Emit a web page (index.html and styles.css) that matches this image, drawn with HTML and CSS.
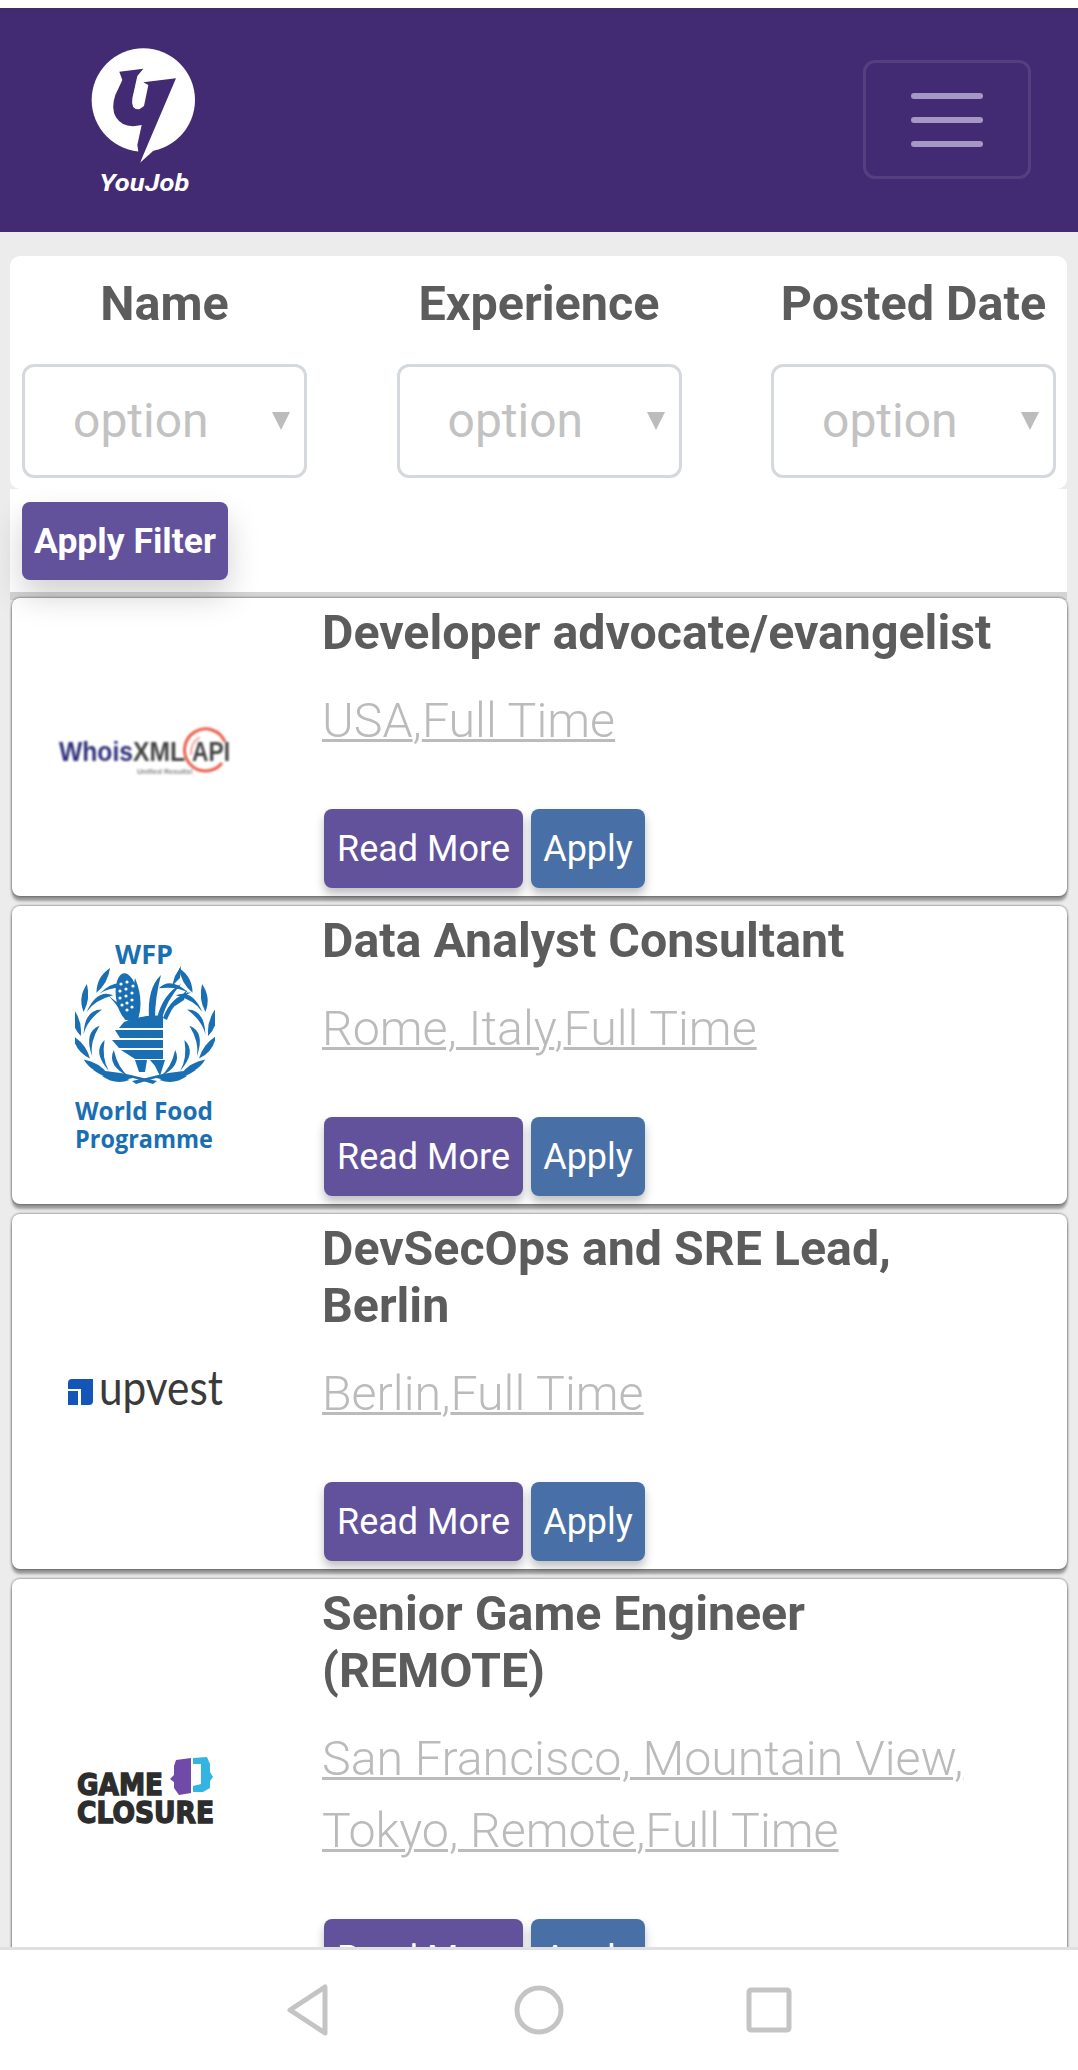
FILE: index.html
```html
<!DOCTYPE html>
<html>
<head>
    <title>YouJob</title>
    <link rel="stylesheet" href="styles.css">
</head>
<body>
    <header class="topbar">
        <svg class="brand" viewBox="0 0 390 540">
            <circle cx="190" cy="210" r="155" fill="#fff"/>
            <path d="M180 398L200 340L262 330Q250 350 225 358Z" fill="#fff"/>
            <path d="M118 125L190 116L172 138L157 205Q152 240 178 238L192 228L205 165L190 157L288 145L180 398L172 345L185 285Q130 298 108 262Q92 235 106 195L127 150Z" fill="#432b73"/>
            <text class="brand_name" x="58" y="483" textLength="270" lengthAdjust="spacingAndGlyphs">YouJob</text>
        </svg>
        <button class="toggler"><span></span><span></span><span></span></button>
    </header>

    <main class="content">
        <section class="filters">
            <div class="filter">
                <label>Name</label>
                <div class="select_wrap"><select><option>option</option></select></div>
            </div>
            <div class="filter">
                <label>Experience</label>
                <div class="select_wrap"><select><option>option</option></select></div>
            </div>
            <div class="filter">
                <label>Posted Date</label>
                <div class="select_wrap"><select><option>option</option></select></div>
            </div>
        </section>
        <div class="filter_action">
            <button class="btn btn_filter">Apply Filter</button>
        </div>

        <div class="jobs">
            <article class="job">
                <div class="job_logo">
                    <svg class="logo_whois" width="176" height="60" viewBox="0 0 176 60">
                        <text x="2" y="38" class="whois_a" textLength="74" lengthAdjust="spacingAndGlyphs">Whois</text>
                        <text x="76" y="38" class="whois_b" textLength="52" lengthAdjust="spacingAndGlyphs">XML</text>
                        <text x="135" y="38" class="whois_b" textLength="38" lengthAdjust="spacingAndGlyphs">API</text>
                        <path d="M165 40A21 21 0 1 1 168 19" fill="none" stroke="#e8604c" stroke-width="3"/>
                        <path d="M134 32Q133 20 143 14" fill="none" stroke="#e8a498" stroke-width="2"/>
                        <text x="80" y="51" class="whois_c" textLength="56" lengthAdjust="spacingAndGlyphs">Unified Results!</text>
                    </svg>
                </div>
                <div class="job_body">
                    <h2 class="job_title">Developer advocate/evangelist</h2>
                    <p class="job_meta"><a href="#">USA</a>,<a href="#">Full Time</a></p>
                    <div class="job_actions">
                        <button class="btn btn_read">Read More</button>
                        <button class="btn btn_apply">Apply</button>
                    </div>
                </div>
            </article>

            <article class="job">
                <div class="job_logo">
                    <svg class="logo_wfp" width="140" height="212" viewBox="0 0 140 212">
                        <defs>
                            <g id="sprig">
                                <path d="M0 0Q-13 9 -28 3Q-14 -4 0 0Z"/>
                                <path d="M-1 -3Q-14 -8 -23 -25Q-26 -8 -1 -3Z"/>
                            </g>
                            <g id="wreath">
                                <use href="#sprig" transform="rotate(15 69 84) translate(69 140)"/>
                                <use href="#sprig" transform="rotate(37 69 84) translate(69 144)"/>
                                <use href="#sprig" transform="rotate(59 69 84) translate(69 147)"/>
                                <use href="#sprig" transform="rotate(81 69 84) translate(69 148)"/>
                                <use href="#sprig" transform="rotate(103 69 84) translate(69 146)"/>
                                <use href="#sprig" transform="rotate(125 69 84) translate(69 142)"/>
                                <path d="M68 136Q48 130 18 128Q38 142 58 136L78 142L82 139Z"/>
                            </g>
                        </defs>
                        <text x="69" y="22" text-anchor="middle" class="wfp_top">WFP</text>
                        <g fill="#1a6fb3">
                            <use href="#wreath"/>
                            <use href="#wreath" transform="translate(139 0) scale(-1 1)"/>
                            <path d="M29 50Q42 60 50 78L58 76L44 62Z"/>
                            <ellipse cx="52" cy="55" rx="11" ry="24" transform="rotate(-8 52 55)"/>
                            <path d="M60 36Q70 60 62 80L53 78Z"/>
                            <path d="M74 76Q72 46 86 33Q80 56 80 76Z"/>
                            <path d="M82 76Q88 52 106 42Q92 58 87 76Z"/>
                            <path d="M88 76Q96 54 116 50Q98 60 92 78Z"/>
                            <path d="M100 34L106 24L105 36L97 44Z"/>
                            <path d="M100 60L112 48L109 58L100 64Z"/>
                            <path d="M49 80Q70 72 88 74V86H44Z"/>
                            <path d="M40 88H88V96H45Z"/>
                            <path d="M37 98H88V106H44Z"/>
                            <path d="M46 108H88V117H60Z"/>
                            <path d="M60 118L72 118L70 130L64 130Z"/>
                            <path d="M75 118H90L85 134L80 124Z"/>
                        </g>
                        <g fill="#fff">
                            <circle cx="46" cy="42" r="1.6"/><circle cx="52" cy="40" r="1.6"/><circle cx="58" cy="44" r="1.6"/>
                            <circle cx="45" cy="49" r="1.6"/><circle cx="51" cy="47" r="1.6"/><circle cx="57" cy="51" r="1.6"/>
                            <circle cx="45" cy="56" r="1.6"/><circle cx="51" cy="54" r="1.6"/><circle cx="57" cy="58" r="1.6"/>
                            <circle cx="47" cy="63" r="1.6"/><circle cx="52" cy="61" r="1.6"/><circle cx="57" cy="65" r="1.6"/>
                            <circle cx="52" cy="68" r="1.6"/>
                        </g>
                        <text x="69" y="178" text-anchor="middle" class="wfp_name" textLength="138" lengthAdjust="spacingAndGlyphs">World Food</text>
                        <text x="69" y="206" text-anchor="middle" class="wfp_name" textLength="138" lengthAdjust="spacingAndGlyphs">Programme</text>
                    </svg>
                </div>
                <div class="job_body">
                    <h2 class="job_title">Data Analyst Consultant</h2>
                    <p class="job_meta"><a href="#">Rome, Italy</a>,<a href="#">Full Time</a></p>
                    <div class="job_actions">
                        <button class="btn btn_read">Read More</button>
                        <button class="btn btn_apply">Apply</button>
                    </div>
                </div>
            </article>

            <article class="job">
                <div class="job_logo">
                    <svg class="logo_upvest" width="158" height="54" viewBox="0 0 158 54">
                        <path d="M2 20Q2 16 6 16H27V38Q27 42 23 42H15V26H2Z" fill="#1456b8"/>
                        <path d="M2 28H12V42H2Z" fill="#1456b8"/>
                        <text x="33" y="42" class="upvest_name" textLength="124" lengthAdjust="spacingAndGlyphs">upvest</text>
                    </svg>
                </div>
                <div class="job_body">
                    <h2 class="job_title">DevSecOps and SRE Lead, Berlin</h2>
                    <p class="job_meta"><a href="#">Berlin</a>,<a href="#">Full Time</a></p>
                    <div class="job_actions">
                        <button class="btn btn_read">Read More</button>
                        <button class="btn btn_apply">Apply</button>
                    </div>
                </div>
            </article>

            <article class="job">
                <div class="job_logo">
                    <svg class="logo_game" width="140" height="70" viewBox="0 0 140 70">
                        <text x="2" y="39" class="game_name" textLength="86" lengthAdjust="spacingAndGlyphs">GAME</text>
                        <text x="2" y="67" class="game_name" textLength="137" lengthAdjust="spacingAndGlyphs">CLOSURE</text>
                        <path d="M101 4L116 2V37L104 39L99 32V26L95 23L99 19V10Z" fill="#6f4aa8"/>
                        <path d="M118 2L132 1L135 8V16L138 21L135 25V32L128 36H118V30L126 28V8L118 8Z" fill="#34b4e0"/>
                    </svg>
                </div>
                <div class="job_body">
                    <h2 class="job_title">Senior Game Engineer (REMOTE)</h2>
                    <p class="job_meta"><a href="#">San Francisco, Mountain View, Tokyo, Remote</a>,<a href="#">Full Time</a></p>
                    <div class="job_actions">
                        <button class="btn btn_read">Read More</button>
                        <button class="btn btn_apply">Apply</button>
                    </div>
                </div>
            </article>
        </div>
    </main>

    <nav class="softkeys">
        <svg width="50" height="54" viewBox="0 0 50 54"><path d="M41 4V50L6 27Z" fill="none" stroke="#c4c4c4" stroke-width="5" stroke-linejoin="round"/></svg>
        <svg width="50" height="54" viewBox="0 0 50 54"><ellipse cx="25" cy="27" rx="22" ry="22" fill="none" stroke="#c4c4c4" stroke-width="5"/></svg>
        <svg width="50" height="54" viewBox="0 0 50 54"><rect x="5" y="7" width="40" height="40" rx="2" fill="none" stroke="#c4c4c4" stroke-width="5"/></svg>
    </nav>
</body>
</html>
```

FILE: styles.css
```css
* {
    box-sizing: border-box;
    font-family: Roboto, "Liberation Sans", sans-serif;
}
html, body {
    margin: 0;
    height: 2070px;
    overflow: hidden;
    background: #fff;
}
body {
    padding-top: 8px;
}
.topbar {
    display: flex;
    justify-content: space-between;
    align-items: flex-start;
    height: 224px;
    padding: 14px 47px 0 80px;
    background: #432b73;
    border-top: 3px solid #3f2d68;
}
.brand {
    width: 130px;
    height: 180px;
    margin-top: 5px;
}
.brand_name {
    font-size: 72px;
    font-weight: 700;
    font-style: italic;
    fill: #fff;
}
.toggler {
    display: flex;
    flex-direction: column;
    align-items: center;
    gap: 18px;
    width: 168px;
    height: 119px;
    margin-top: 35px;
    padding: 30px 0 0;
    background: none;
    border: 3px solid #54407f;
    border-radius: 12px;
}
.toggler span {
    width: 72px;
    height: 6px;
    background: #a698c4;
    border-radius: 3px;
}
.content {
    padding: 24px 11px 0 10px;
    background: #ececec;
    height: 1838px;
}
.filters {
    display: flex;
    justify-content: space-between;
    height: 233px;
    padding: 19px 11px 0 12px;
    background: #fff;
    border-radius: 10px;
}
.filter {
    width: 285px;
    text-align: center;
}
.filter label {
    display: block;
    height: 57px;
    margin-bottom: 32px;
    font-size: 48.5px;
    line-height: 57px;
    font-weight: 700;
    color: #5c5c5c;
    white-space: nowrap;
}
.select_wrap {
    position: relative;
}
.select_wrap::after {
    content: "";
    position: absolute;
    right: 17px;
    top: 48px;
    border-left: 9px solid transparent;
    border-right: 9px solid transparent;
    border-top: 18px solid #bcbcbc;
}
.select_wrap select {
    display: block;
    width: 100%;
    height: 114px;
    padding: 0 0 2px 48px;
    appearance: none;
    background: #fff;
    border: 3px solid #d5d8dc;
    border-radius: 12px;
    font-size: 48px;
    color: #c2c2c2;
}
.filter_action {
    height: 103px;
    padding: 13px 12px 0;
    background: #fff;
}
.btn {
    height: 79px;
    padding: 0;
    border: 0;
    border-radius: 8px;
    font-size: 36px;
    color: #fff;
    white-space: nowrap;
}
.btn_filter {
    position: relative;
    z-index: 2;
    width: 206px;
    height: 78px;
    font-size: 35.5px;
    font-weight: 700;
    background: #62529c;
    box-shadow: 0 16px 32px rgba(0, 0, 0, 0.18);
}
.jobs {
    display: flex;
    flex-direction: column;
    gap: 10px;
    padding: 6px 0 0 2px;
    background: linear-gradient(#d4d4d4, #d4d4d4) top / 100% 8px no-repeat;
}
.job {
    display: flex;
    flex-shrink: 0;
    padding: 5px 50px 8px 0;
    background: #fff;
    border-radius: 8px;
    box-shadow: 0 0 2px 1px rgba(0, 0, 0, 0.3), 0 5px 3px rgba(0, 0, 0, 0.35);
}
.job_logo {
    display: flex;
    align-items: center;
    justify-content: center;
    flex-shrink: 0;
    width: 310px;
    padding-right: 44px;
}
.job_logo svg {
    display: block;
}
.job_body {
    flex: 1;
}
.job_title {
    margin: 0 0 25px;
    padding-top: 1px;
    font-size: 48.3px;
    line-height: 57px;
    font-weight: 700;
    color: #5c5c5c;
}
.job_meta {
    margin: -1px 0 52px;
    font-size: 48.3px;
    line-height: 72px;
    font-weight: 300;
    color: #bbb;
}
.job_meta a {
    color: #bbb;
    text-decoration-thickness: 3px;
}
.job_actions {
    display: flex;
    gap: 8px;
    padding-left: 2px;
}
.btn_read {
    width: 199px;
    background: #62529c;
    box-shadow: 0 6px 10px rgba(0, 0, 0, 0.25);
}
.btn_apply {
    width: 114px;
    background: #4870a6;
    box-shadow: 0 6px 10px rgba(0, 0, 0, 0.25);
}
.logo_whois {
    margin-top: 14px;
    filter: blur(0.8px);
}
.logo_wfp {
    margin-bottom: 12px;
}
.whois_a, .whois_b {
    font-family: "Liberation Sans", sans-serif;
    font-size: 27px;
    font-weight: 700;
}
.whois_a {
    fill: #2f2f7a;
}
.whois_b {
    fill: #444;
}
.whois_c {
    font-family: "Liberation Sans", sans-serif;
    font-size: 8px;
    font-weight: 700;
    fill: #888;
}
.wfp_top, .wfp_name {
    font-family: "Open Sans", sans-serif;
    font-weight: 700;
    fill: #1a6fb3;
}
.wfp_top {
    font-size: 27px;
}
.wfp_name {
    font-size: 25px;
}
.upvest_name {
    font-family: Lato, sans-serif;
    font-size: 48px;
    font-weight: 400;
    fill: #3a3a3a;
}
.game_name {
    font-family: "DejaVu Sans", sans-serif;
    font-size: 30px;
    font-weight: 700;
    fill: #2d2d2d;
    stroke: #2d2d2d;
    stroke-width: 1.5px;
}
.softkeys {
    position: fixed;
    left: 0;
    right: 0;
    bottom: 0;
    display: flex;
    justify-content: center;
    align-items: center;
    gap: 180px;
    height: 123px;
    background: #fff;
    border-top: 3px solid #e0e0e0;
}
```
